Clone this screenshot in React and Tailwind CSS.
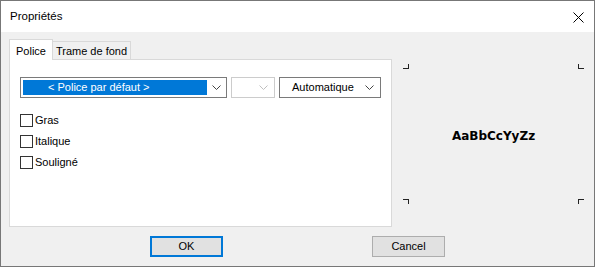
import React from 'react';

const ui = "font-['Liberation_Sans',Arial,sans-serif] text-[11px] text-black";

function Chevron({ color = '#444' }) {
  return (
    <svg width="9" height="5" viewBox="0 0 9 5" fill="none">
      <path d="M0.5 0.5L4.5 4.5L8.5 0.5" stroke={color} strokeWidth="1" />
    </svg>
  );
}

function Checkbox({ label }) {
  return (
    <div className="flex items-center h-[13px]">
      <div className="w-[13px] h-[13px] border border-[#333] bg-white" />
      <span className="ml-[2px] leading-none">{label}</span>
    </div>
  );
}

export default function App() {
  return (
    <div className={`w-[595px] h-[267px] border border-[#777] flex flex-col ${ui}`}>
      {/* Title bar */}
      <div className="h-[31px] bg-white flex items-center justify-between pl-[9px] pr-[10px]">
        <span className="text-[11.5px] pt-[1px]">Propriétés</span>
        <svg width="11" height="11" viewBox="0 0 11 11" className="mt-[1px]">
          <path d="M0.5 0.5L10.5 10.5M10.5 0.5L0.5 10.5" stroke="#000" strokeWidth="1" />
        </svg>
      </div>

      {/* Body */}
      <div className="flex-1 bg-[#f0f0f0] pl-[8px] pt-[7px] flex flex-col">
        <div className="flex">
          {/* Tabs + panel */}
          <div className="w-[383px] flex flex-col">
            <div className="flex items-end h-[20px]">
              <div className="relative z-10 h-[21px] -mb-[1px] w-[44px] bg-white border-t border-l border-r border-[#d9d9d9] flex items-start justify-center pt-[3px]">
                Police
              </div>
              <div className="h-[18px] w-[78px] border-t border-r border-[#d9d9d9] bg-[#f0f0f0] flex items-center justify-center pt-[1px]">
                Trame de fond
              </div>
            </div>
            <div className="h-[168px] bg-white border border-[#d9d9d9] pt-[17px] pl-[10px]">
              <div className="flex gap-[4px]">
                <div className="w-[207px] h-[21px] border border-[#7a7a7a] bg-white flex items-center pl-[2px]">
                  <div className="w-[184px] h-[15px] bg-[#0078d7] text-white flex items-center pl-[25px] leading-none">
                    &lt; Police par défaut &gt;
                  </div>
                  <div className="flex-1 flex justify-center">
                    <Chevron />
                  </div>
                </div>
                <div className="w-[44px] h-[21px] border border-[#cccccc] bg-white flex items-center justify-end pr-[6px]">
                  <Chevron color="#bfbfbf" />
                </div>
                <div className="w-[102px] h-[21px] border border-[#7a7a7a] bg-white flex items-center justify-between pl-[12px] pr-[6px]">
                  <span className="leading-none">Automatique</span>
                  <Chevron />
                </div>
              </div>
              <div className="flex flex-col gap-[8px] mt-[16px]">
                <Checkbox label="Gras" />
                <Checkbox label="Italique" />
                <Checkbox label="Souligné" />
              </div>
            </div>
          </div>

          {/* Preview */}
          <div className="ml-[11px] mt-[25px] w-[181px] h-[140px] flex flex-col justify-between">
            <div className="flex justify-between">
              <div className="w-[6px] h-[5px] border-r border-b border-[#222]" />
              <div className="w-[6px] h-[5px] border-l border-b border-[#222]" />
            </div>
            <div className="text-center font-['DejaVu_Sans',sans-serif] font-bold text-[12px] leading-none pt-[3px]">
              AaBbCcYyZz
            </div>
            <div className="flex justify-between">
              <div className="w-[6px] h-[5px] border-r border-t border-[#222]" />
              <div className="w-[6px] h-[5px] border-l border-t border-[#222]" />
            </div>
          </div>
        </div>

        {/* Buttons */}
        <div className="flex mt-[9px] ml-[141px]">
          <button className="w-[73px] h-[21px] border-2 border-[#0078d7] bg-[#e1e1e1] flex items-center justify-center">
            OK
          </button>
          <button className="ml-[149px] w-[73px] h-[21px] border border-[#adadad] bg-[#e1e1e1] flex items-center justify-center">
            Cancel
          </button>
        </div>
      </div>
    </div>
  );
}
